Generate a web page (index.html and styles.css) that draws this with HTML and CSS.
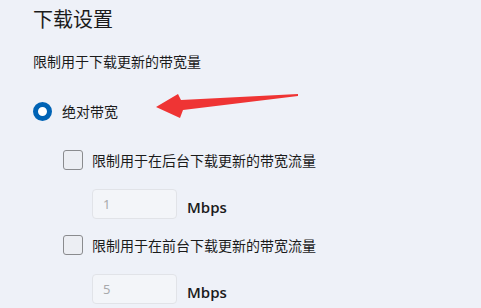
FILE: index.html
```html
<!DOCTYPE html>
<html lang="zh-CN">
<head>
<meta charset="utf-8">
<link rel="stylesheet" href="styles.css">
</head>
<body>
<div class="page">
  <h1 class="title">下载设置</h1>
  <p class="desc">限制用于下载更新的带宽量</p>
  <div class="radio-row">
    <span class="radio"></span>
    <span class="label">绝对带宽</span>
  </div>
  <div class="check-row">
    <span class="checkbox"></span>
    <span class="label">限制用于在后台下载更新的带宽流量</span>
  </div>
  <div class="input-row">
    <div class="field">1</div>
    <span class="unit">Mbps</span>
  </div>
  <div class="check-row second">
    <span class="checkbox"></span>
    <span class="label">限制用于在前台下载更新的带宽流量</span>
  </div>
  <div class="input-row">
    <div class="field">5</div>
    <span class="unit">Mbps</span>
  </div>
  <svg class="arrow" width="481" height="308" viewBox="0 0 481 308">
    <polygon points="156,107 178,94 181,100 298,94 298,96 183,110 180,118" fill="#ef3434"/>
  </svg>
</div>
</body>
</html>
```
FILE: styles.css
```css
html, body {
  margin: 0;
  padding: 0;
  background: #eef1f8;
}
body {
  font-family: "Noto Sans CJK SC", "Noto Sans", sans-serif;
  color: #1b1b1b;
  width: 481px;
  height: 308px;
  overflow: hidden;
}
.page {
  position: relative;
  padding-left: 33px;
  height: 308px;
}
.title {
  margin: 0;
  font-size: 20px;
  font-weight: 400;
  line-height: 38px;
}
.desc {
  margin: 13px 0 0 0;
  font-size: 14px;
  line-height: 21px;
}
.radio-row {
  margin-top: 22px;
  height: 34px;
  display: flex;
  align-items: center;
}
.radio {
  box-sizing: border-box;
  width: 19px;
  height: 19px;
  border-radius: 50%;
  border: 5px solid #0063b5;
  background: #ffffff;
  margin-right: 10px;
}
.label {
  font-size: 14px;
  line-height: 20px;
}
.check-row {
  margin-top: 13px;
  margin-left: 30px;
  height: 37px;
  display: flex;
  align-items: center;
}
.check-row.second {
  margin-top: 7px;
}
.checkbox {
  box-sizing: border-box;
  width: 20px;
  height: 20px;
  border: 1px solid #8a8b8e;
  border-radius: 3px;
  background: #eceef3;
  margin-right: 9px;
}
.input-row {
  margin-top: 11px;
  margin-left: 59px;
  display: flex;
  align-items: center;
}
.field {
  box-sizing: border-box;
  width: 85px;
  height: 30px;
  border: 1px solid #e1e3e8;
  border-radius: 4px;
  background: #f3f5f9;
  padding-left: 10px;
  font-family: "Noto Sans", sans-serif;
  font-size: 13px;
  line-height: 28px;
  color: #a8a9ac;
}
.unit {
  margin-left: 10px;
  margin-top: 6px;
  font-family: "Open Sans", sans-serif;
  font-weight: 600;
  font-size: 15px;
  color: #1b1b1b;
}
.arrow {
  position: absolute;
  left: 0;
  top: 0;
  pointer-events: none;
}
```
